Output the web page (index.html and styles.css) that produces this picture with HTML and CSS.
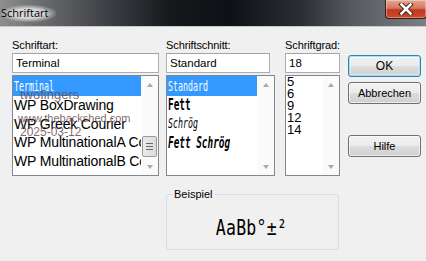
FILE: index.html
```html
<!DOCTYPE html>
<html>
<head>
<meta charset="utf-8">
<link rel="stylesheet" href="styles.css">
</head>
<body>
<div class="window">
  <div class="titlebar">
    <span class="title">Schriftart</span>
    <div class="close">
      <svg width="16" height="12" viewBox="0 0 16 12"><path d="M3.5 1.5 L12.5 10.5 M12.5 1.5 L3.5 10.5" stroke="#3a1a12" stroke-width="4.4" stroke-linecap="square"/><path d="M3.5 1.5 L12.5 10.5 M12.5 1.5 L3.5 10.5" stroke="#fff" stroke-width="2.6" stroke-linecap="square"/></svg>
    </div>
  </div>
  <div class="client">
    <div class="top">
      <div class="col col-font">
        <div class="label">Schriftart:</div>
        <div class="input">Terminal</div>
        <div class="list">
          <div class="items">
            <div class="item sel term"><span class="tt">Terminal</span></div>
            <div class="item big">WP BoxDrawing</div>
            <div class="item big">WP Greek Courier</div>
            <div class="item big">WP MultinationalA Co</div>
            <div class="item big">WP MultinationalB Co</div>
          </div>
          <div class="sbar">
            <div class="arr up"></div>
            <div class="track"><div class="thumb"><span></span><span></span><span></span></div></div>
            <div class="arr down"></div>
          </div>
          <div class="wm wm1">twofingers</div>
          <div class="wm wm2">www.thebackshed.com</div>
          <div class="wm wm3">2025-03-12</div>
        </div>
      </div>
      <div class="col col-style">
        <div class="label">Schriftschnitt:</div>
        <div class="input in-style">Standard</div>
        <div class="list">
          <div class="items">
            <div class="item sel term"><span class="tt">Standard</span></div>
            <div class="item term"><span class="tt b">Fett</span></div>
            <div class="item term"><span class="tt i">Schrög</span></div>
            <div class="item term"><span class="tt b i">Fett Schrög</span></div>
          </div>
          <div class="sbar">
            <div class="arr up"></div>
            <div class="track"></div>
            <div class="arr down"></div>
          </div>
        </div>
      </div>
      <div class="col col-size">
        <div class="label">Schriftgrad:</div>
        <div class="input">18</div>
        <div class="list">
          <div class="items small">
            <div class="sitem">5</div>
            <div class="sitem">6</div>
            <div class="sitem">9</div>
            <div class="sitem">12</div>
            <div class="sitem">14</div>
          </div>
          <div class="sbar">
            <div class="arr up"></div>
            <div class="track"></div>
            <div class="arr down"></div>
          </div>
        </div>
      </div>
      <div class="buttons">
        <div class="btn focus">OK</div>
        <div class="btn">Abbrechen</div>
        <div class="btn help">Hilfe</div>
      </div>
    </div>
    <div class="sample-row">
      <fieldset class="group">
        <legend>Beispiel</legend>
        <div class="sample"><span class="tt">AaBb°±²</span></div>
      </fieldset>
    </div>
  </div>
</div>
</body>
</html>
```
FILE: styles.css
```css
* { box-sizing: border-box; }
html, body { margin: 0; padding: 0; }
body {
  width: 426px; height: 261px; overflow: hidden;
  font-family: "Liberation Sans", Arial, sans-serif;
  font-size: 11px; color: #000;
  background: #f0f0f0;
}
.window { width: 426px; height: 261px; display: flex; flex-direction: column; }
.titlebar {
  height: 27px; flex: none; display: flex; align-items: flex-start; justify-content: space-between;
  background: linear-gradient(90deg, #8e8e8e 0px, #6c6d6f 40px, #3b3e42 110px, #16191c 170px, #0d1014 230px, #2a2d31 300px, #55585c 350px, #7c8084 426px);
  border-bottom: 1px solid #c9c9c9;
}
.title {
  font-family: "Open Sans", "DejaVu Sans", sans-serif; font-size: 11px; color: #000;
  margin: 5px 0 0 1px; padding: 0 8px 2px 0;
  background: radial-gradient(ellipse at center, rgba(230,230,230,0.85) 40%, rgba(230,230,230,0) 75%);
}
.close {
  width: 42px; height: 19px; margin-right: -1px;
  background: linear-gradient(180deg, #e8a592 0%, #d47862 45%, #c2391c 55%, #cc4a2c 100%);
  border: 1px solid #3a1a12; border-top: none;
  border-radius: 0 0 4px 4px;
  display: flex; align-items: center; justify-content: center;
  box-shadow: inset 0 0 0 1px rgba(255,255,255,0.35);
}
.client { flex: 1; padding: 11px 0 0 12px; display: flex; flex-direction: column; }
.top { display: flex; }
.col { display: flex; flex-direction: column; }
.col-font { width: 147px; margin-right: 7px; }
.col-style { width: 109px; margin-right: 10px; }
.col-size { width: 55px; margin-right: 8px; }
.label { height: 15px; line-height: 14px; font-size: 11px; letter-spacing: -0.1px; }
.input {
  height: 20px; border: 1px solid #abadb3; border-top-color: #a2a3a8; background: #fff;
  padding: 1px 0 0 3px; font-size: 11.5px; line-height: 16px; margin-bottom: 2px;
}
.in-style { width: 104px; }
.list {
  position: relative; height: 101px; border: 1px solid #828790; background: #fff;
  display: flex;
}
.items { flex: 1; overflow: hidden; }
.item { height: 19px; line-height: 19px; white-space: nowrap; padding-left: 1px; }
.item.sel { background: #3399ff; color: #fff; height: 20px; line-height: 20px; }
.item.big { font-size: 14px; height: 18.5px; line-height: 18px; letter-spacing: -0.15px; }
.tt {
  display: inline-block; font-family: "DejaVu Sans Mono", monospace; font-size: 8.3px;
  transform: scaleY(1.6); transform-origin: 0 60%;
}
.tt.b { font-weight: bold; font-size: 9.4px; }
.tt.i { font-style: italic; }
.term { font-size: 12px; }
.sitem { font-size: 13px; line-height: 12px; padding-left: 1px; }
.sbar { width: 17px; flex: none; display: flex; flex-direction: column; background: #fafafa; border-left: 1px solid #fff; }
.arr { height: 17px; position: relative; }
.arr::after {
  content: ""; position: absolute; left: 5px; width: 0; height: 0;
  border-left: 3.5px solid transparent; border-right: 3.5px solid transparent;
}
.arr.up::after { top: 7px; border-bottom: 4px solid #a8a8a8; }
.arr.down::after { top: 7px; border-top: 4px solid #a8a8a8; }
.track { flex: 1; position: relative; }
.thumb {
  position: absolute; left: 0; right: 1px; bottom: 1px; height: 21px;
  border: 1px solid #9a9a9a; border-radius: 2px;
  background: linear-gradient(90deg, #eaeaea, #dcdcdc);
  display: flex; flex-direction: column; align-items: center; justify-content: center; gap: 2px;
}
.thumb span { width: 7px; height: 1px; background: #6a6a6a; display: block; }
.wm {
  position: absolute; font-family: "Liberation Sans", Arial, sans-serif; color: rgba(105, 75, 80, 0.85);
  white-space: nowrap; line-height: 1;
}
.wm1 { left: 7px; top: 12px; font-size: 13px; }
.wm2 { left: 5px; top: 37px; font-size: 11px; }
.wm3 { left: 7px; top: 50px; font-size: 12px; }
.buttons { display: flex; flex-direction: column; width: 73px; padding-top: 17px; }
.btn {
  height: 22px; border: 1px solid #707070; border-radius: 3px;
  background: linear-gradient(180deg, #f2f2f2 0%, #ebebeb 48%, #dddddd 52%, #cfcfcf 100%);
  display: flex; align-items: center; justify-content: center; font-size: 11px;
  box-shadow: inset 0 0 0 1px rgba(255,255,255,0.6);
  margin-bottom: 5px;
}
.btn.focus {
  border-color: #3c7fb1;
  box-shadow: inset 0 0 0 1px rgba(72,212,250,0.5), inset 0 0 0 2px rgba(255,255,255,0.4);
  font-size: 12px;
}
.btn.help { margin-top: 26px; }
.sample-row { display: flex; padding-left: 154px; margin-top: 12px; }
.group {
  margin: 0; width: 173px; height: 62px; border: 1px solid #d5dfe5; border-radius: 3px;
  padding: 0;
}
.group legend { font-size: 11px; padding: 0 2px; margin-left: 5px; line-height: 12px; }
.sample { display: flex; justify-content: center; padding-top: 18px; padding-right: 2px; }
.sample .tt { font-size: 16.5px; transform: scaleY(1.3); letter-spacing: 0.3px; transform-origin: 0 50%; }
```
